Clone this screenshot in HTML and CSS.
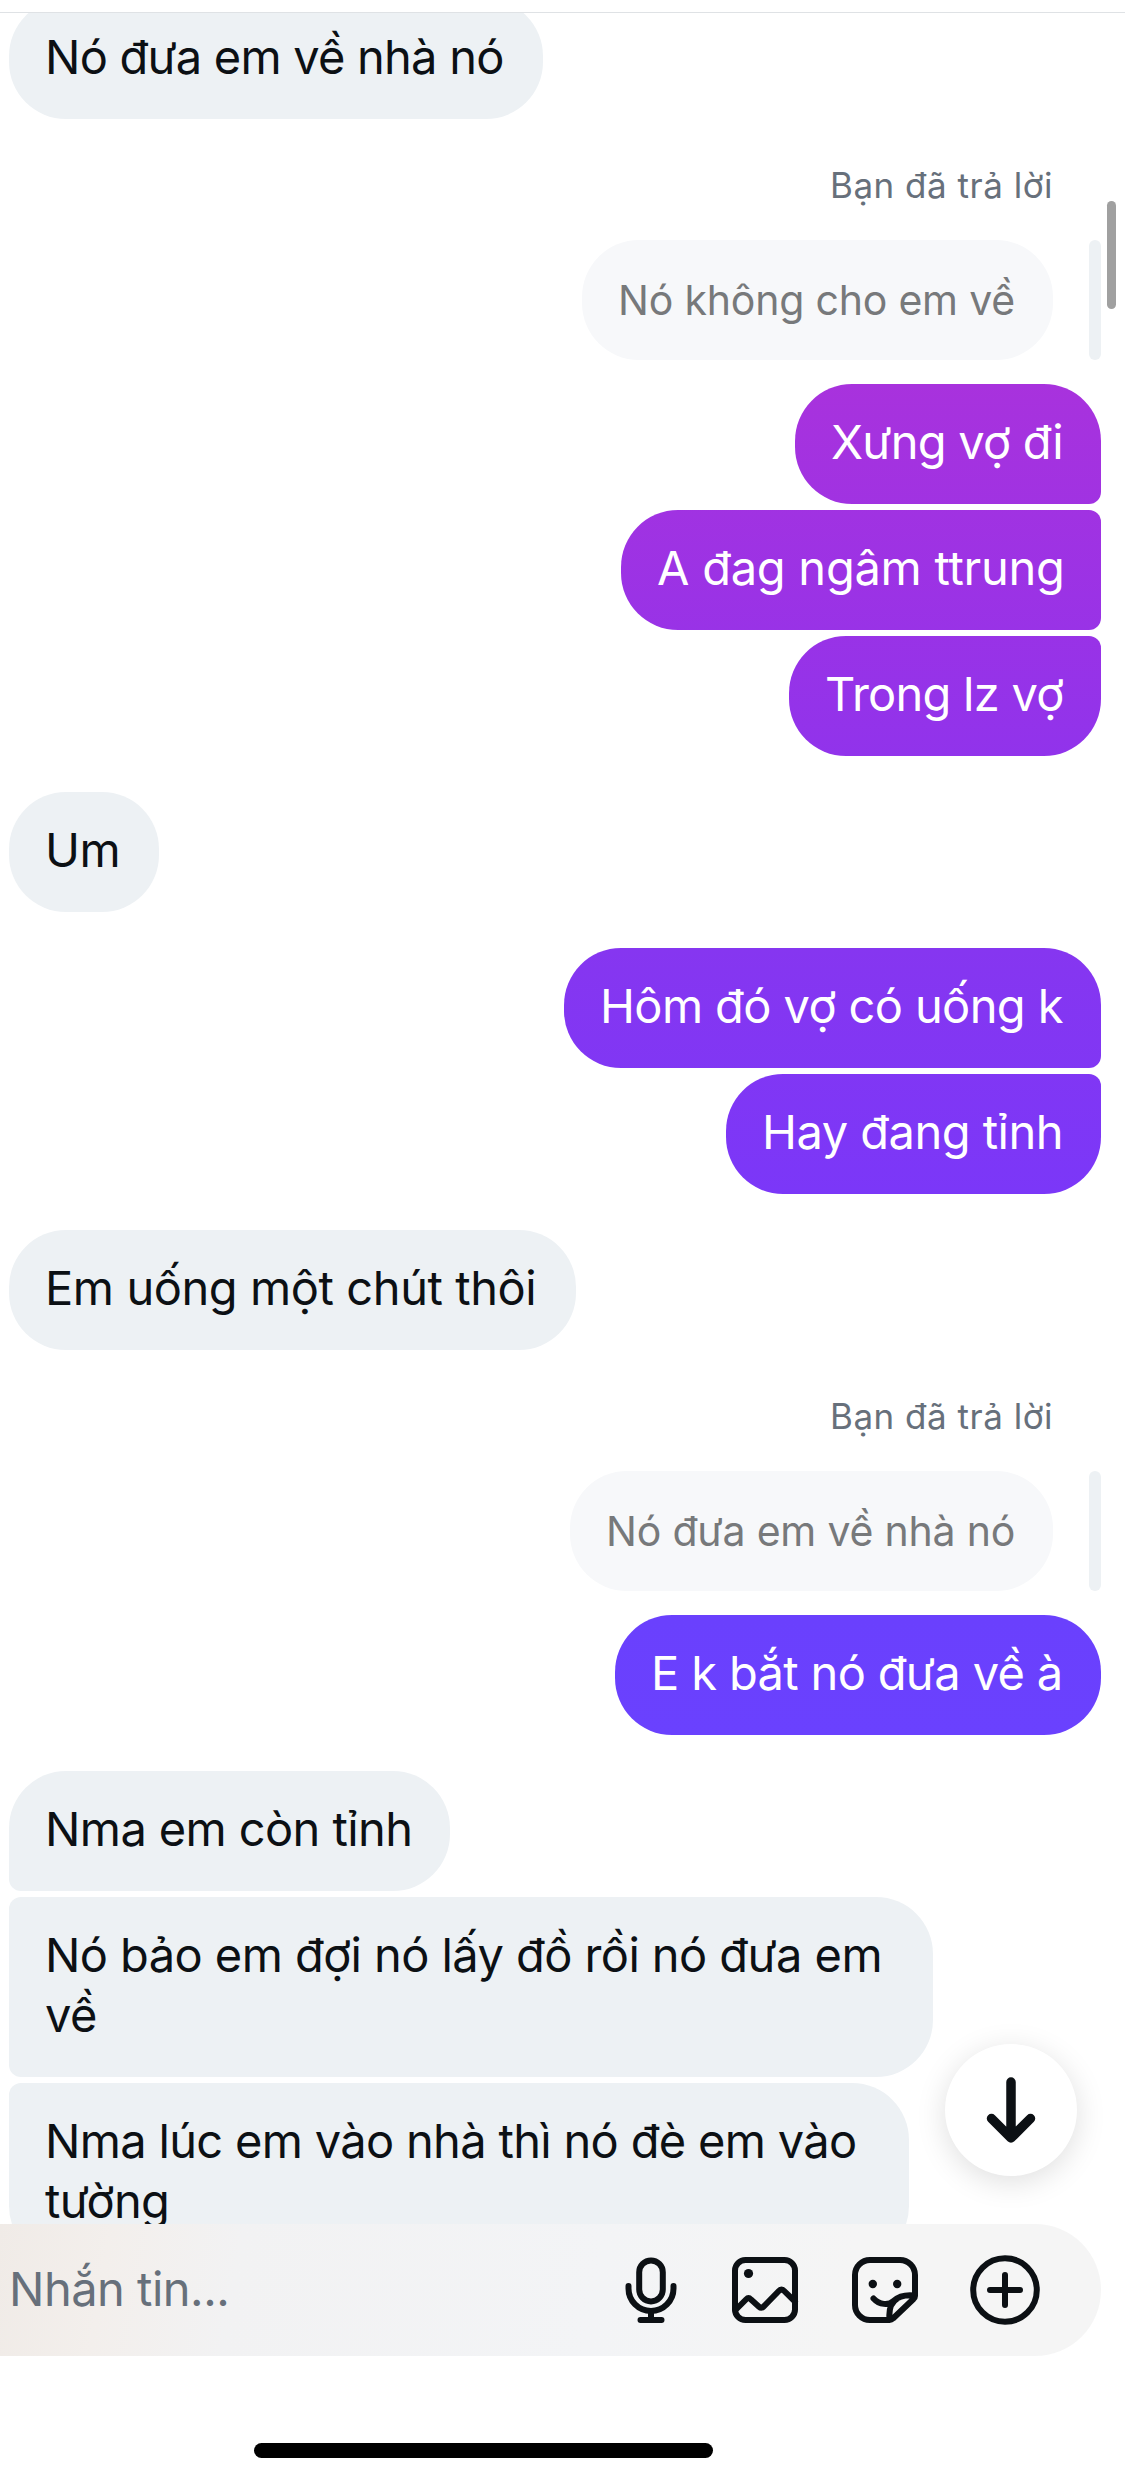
FILE: index.html
```html
<!DOCTYPE html>
<html lang="vi">
<head>
<meta charset="utf-8">
<title>Tin nhắn</title>
<link rel="stylesheet" href="styles.css">
</head>
<body>
<div class="screen">
  <header class="topbar"></header>
  <main class="thread">
    <div class="group received first">
      <div class="bubble m1"><span>Nó đưa em về nhà nó</span></div>
    </div>
    <div class="reply">
      <div class="reply-label"><span>Bạn đã trả lời</span></div>
      <div class="quote-row"><div class="quote q1"><span>Nó không cho em về</span></div><i class="quote-bar"></i></div>
    </div>
    <div class="group sent after-reply">
      <div class="bubble m2"><span>Xưng vợ đi</span></div>
      <div class="bubble m3"><span>A đag ngâm ttrung</span></div>
      <div class="bubble m4"><span>Trong lz vợ</span></div>
    </div>
    <div class="group received">
      <div class="bubble m5"><span>Um</span></div>
    </div>
    <div class="group sent">
      <div class="bubble m6"><span>Hôm đó vợ có uống k</span></div>
      <div class="bubble m7"><span>Hay đang tỉnh</span></div>
    </div>
    <div class="group received">
      <div class="bubble m8"><span>Em uống một chút thôi</span></div>
    </div>
    <div class="reply">
      <div class="reply-label"><span>Bạn đã trả lời</span></div>
      <div class="quote-row"><div class="quote q2"><span>Nó đưa em về nhà nó</span></div><i class="quote-bar"></i></div>
    </div>
    <div class="group sent after-reply">
      <div class="bubble m9"><span>E k bắt nó đưa về à</span></div>
    </div>
    <div class="group received">
      <div class="bubble m10"><span>Nma em còn tỉnh</span></div>
      <div class="bubble m11"><span>Nó bảo em đợi nó lấy đồ rồi nó đưa em<br>về</span></div>
      <div class="bubble m12"><span>Nma lúc em vào nhà thì nó đè em vào<br>tường</span></div>
    </div>
  </main>
  <footer class="composer">
    <span class="placeholder">Nhắn tin...</span>
    <div class="actions">
      <svg class="icon mic" viewBox="0 0 72 72"><rect x="24.2" y="6.4" width="23.6" height="41" rx="11.8"/><path d="M13.500 32v2.500a22.500 22.500 0 0 0 45 0V32M36 57v9M25.500 66h21"/></svg>
      <svg class="icon" viewBox="0 0 72 72"><rect x="6" y="6" width="60" height="60" rx="10.5"/><path d="M6.500 56 17 45.500q2.500-2.500 5 0L30 52.700q2.200 2 4.500 0L49.800 37q2.700-2.700 5.400 0L66 47.500"/><circle class="dot" cx="19.500" cy="19.500" r="4.600"/></svg>
      <svg class="icon" viewBox="0 0 72 72"><path d="M66 42V21A15 15 0 0 0 51 6H21A15 15 0 0 0 6 21v30a15 15 0 0 0 15 15h19.500c1.500 0 2.500-.5 3.500-1.500L64.500 45c1-1 1.500-1.800 1.500-3ZM24.500 44.500c6 6.500 15 7 20 2.500 4.500-4 11-6.500 20.500-5.500M40.500 65c-1-11 2-17 8-20.500"/><circle class="dot" cx="23.800" cy="30" r="4.200"/><circle class="dot" cx="48.200" cy="30" r="4.200"/></svg>
      <svg class="icon" viewBox="0 0 72 72"><circle cx="36" cy="36" r="31.800"/><path d="M36 21v30M21 36h30"/></svg>
    </div>
  </footer>
  <div class="home-area"><div class="home-indicator"></div></div>
  <div class="scrollbar"></div>
  <button class="jump" aria-label="Cuộn xuống"><svg viewBox="0 0 132 132"><path d="M66 38v56M46.500 74.500 66 94l19.500-19.500"/></svg></button>
</div>
</body>
</html>
```
FILE: styles.css
```css
* { box-sizing: border-box; }
body { margin: 0; background: #fff; font-family: Inter, "Noto Sans", sans-serif; color: #0c1014; }
.screen { position: relative; display: flex; flex-direction: column; width: 1125px; height: 2482px; overflow: hidden; background: #fff; }
.topbar { flex: none; height: 13px; border-bottom: 1px solid #dfe2e5; }
.thread { flex: none; height: 2211px; overflow: hidden; padding: 0 24px 0 9px; display: flex; flex-direction: column; }
.group { flex: none; display: flex; flex-direction: column; gap: 6px; margin-top: 36px; }
.group.first { margin-top: -14px; }
.group.after-reply { margin-top: 24px; }
.received { align-items: flex-start; }
.sent { align-items: flex-end; }
.bubble { min-height: 120px; padding: 28px 36px 32px; border-radius: 57px; font-size: 47px; line-height: 60px; letter-spacing: -0.6px; white-space: nowrap; }
.received .bubble { background: #edf1f4; }
.received .bubble:not(:first-child) { border-top-left-radius: 12px; }
.received .bubble:not(:last-child) { border-bottom-left-radius: 12px; }
.sent .bubble { color: #fff; background: linear-gradient(180deg, #a832dd 384px, #9133eb 756px, #8636f0 948px, #7b37f8 1194px, #6a40fd 1615px, #6a41fe 1735px) fixed; }
.sent .bubble:not(:first-child) { border-top-right-radius: 12px; }
.sent .bubble:not(:last-child) { border-bottom-right-radius: 12px; }
.m1 { width: 534px; letter-spacing: -0.78px; }
.m2 { width: 306px; letter-spacing: -0.75px; }
.m3 { width: 480px; letter-spacing: -0.25px; }
.m4 { width: 312px; letter-spacing: -0.75px; }
.m5 { width: 150px; letter-spacing: -0.4px; }
.m6 { width: 537px; }
.m7 { width: 375px; letter-spacing: -0.5px; }
.m8 { width: 567px; letter-spacing: -0.42px; }
.m9 { width: 486px; letter-spacing: -0.65px; }
.m10 { width: 441px; }
.m11 { width: 924px; letter-spacing: -0.57px; }
.m12 { width: 900px; letter-spacing: -0.68px; }
.reply { flex: none; display: flex; flex-direction: column; margin-top: 45px; }
.reply-label { height: 76px; padding-right: 48px; text-align: right; font-size: 35px; line-height: 42px; letter-spacing: 0.5px; color: #67707b; }
.quote-row { display: flex; justify-content: flex-end; gap: 36px; height: 120px; }
.quote { padding: 32px 36px; border-radius: 57px; background: #f7f8fa; color: #77797b; font-size: 41px; line-height: 56px; letter-spacing: -0.2px; white-space: nowrap; }
.q1 { width: 471px; }
.q2 { width: 483px; }
.quote-bar { width: 12px; border-radius: 6px; background: #edf1f4; }
.composer { flex: none; display: flex; align-items: center; justify-content: space-between; width: 1101px; height: 132px; padding: 0 60px 0 9px; border-radius: 0 66px 66px 0; background: linear-gradient(100deg, #f0ebe7 0, #f3efec 110px, #f2f2f3 240px, #f3f4f6 600px, #f5f5f5 850px, #f5f5f5 100%); }
.placeholder { padding-bottom: 2px; font-size: 47px; line-height: 60px; letter-spacing: -0.5px; color: #67707b; }
.actions { display: flex; gap: 48px; }
.mic { margin-right: -6px; }
.icon { display: block; width: 72px; height: 72px; fill: none; stroke: #0c1014; stroke-width: 6; stroke-linecap: round; stroke-linejoin: round; }
.icon .dot { fill: #0c1014; stroke: none; }
.home-area { flex: 1; padding: 87px 0 0 254px; }
.home-indicator { width: 459px; height: 15px; border-radius: 8px; background: #000; }
.scrollbar { position: absolute; left: 1107px; top: 201px; width: 9px; height: 108px; border-radius: 5px; background: #a0a0a0; }
.jump { position: absolute; left: 945px; top: 2044px; width: 132px; height: 132px; padding: 0; border: 0; border-radius: 50%; background: #fff; box-shadow: 0 6px 30px rgba(0, 0, 0, 0.13); }
.jump svg { display: block; width: 132px; height: 132px; fill: none; stroke: #0c1014; stroke-width: 9.5; stroke-linecap: round; stroke-linejoin: round; }
```
